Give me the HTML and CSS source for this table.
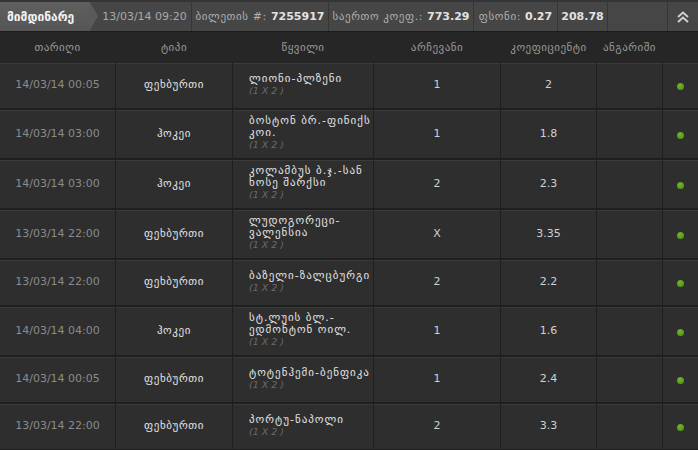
FILE: index.html
```html
<!DOCTYPE html>
<html lang="ka">
<head>
<meta charset="utf-8">
<title>ბილეთი</title>
<link rel="stylesheet" href="styles.css">
</head>
<body>
<div class="panel">
  <div class="topbar">
    <div class="tab">მიმდინარე</div>
    <div class="seg seg-date">13/03/14 09:20</div>
    <div class="seg seg-ticket"><span class="lbl">ბილეთის #:</span> <b>7255917</b></div>
    <div class="seg seg-total"><span class="lbl">საერთო კოეფ.:</span> <b>773.29</b></div>
    <div class="seg seg-stake"><span class="lbl">ფსონი:</span> <b>0.27</b></div>
    <div class="seg seg-amount"><b>208.78</b></div>
    <div class="seg seg-spacer"></div>
    <div class="seg seg-toggle">
      <svg width="14" height="12" viewBox="0 0 14 12"><path d="M2 6 L7 1.5 L12 6 M2 11 L7 6.5 L12 11" fill="none" stroke="#cfcfcf" stroke-width="2"/></svg>
    </div>
  </div>

  <div class="grid head">
    <div>თარიღი</div>
    <div>ტიპი</div>
    <div>წყვილი</div>
    <div>არჩევანი</div>
    <div>კოეფიციენტი</div>
    <div>ანგარიში</div>
    <div></div>
  </div>

  <div class="rows">
    <div class="grid row">
      <div class="c date">14/03/14 00:05</div>
      <div class="c type">ფეხბურთი</div>
      <div class="c name"><span>ლიონი-პლზენი</span><i>(1 X 2 )</i></div>
      <div class="c num">1</div>
      <div class="c num">2</div>
      <div class="c"></div>
      <div class="c"><span class="dot"></span></div>
    </div>
    <div class="grid row">
      <div class="c date">14/03/14 03:00</div>
      <div class="c type">ჰოკეი</div>
      <div class="c name"><span>ბოსტონ ბრ.-ფინიქს კოი.</span><i>(1 X 2 )</i></div>
      <div class="c num">1</div>
      <div class="c num">1.8</div>
      <div class="c"></div>
      <div class="c"><span class="dot"></span></div>
    </div>
    <div class="grid row">
      <div class="c date">14/03/14 03:00</div>
      <div class="c type">ჰოკეი</div>
      <div class="c name"><span>კოლამბუს ბ.ჯ.-სან ხოსე შარქსი</span><i>(1 X 2 )</i></div>
      <div class="c num">2</div>
      <div class="c num">2.3</div>
      <div class="c"></div>
      <div class="c"><span class="dot"></span></div>
    </div>
    <div class="grid row">
      <div class="c date">13/03/14 22:00</div>
      <div class="c type">ფეხბურთი</div>
      <div class="c name"><span>ლუდოგორეცი-ვალენსია</span><i>(1 X 2 )</i></div>
      <div class="c num">X</div>
      <div class="c num">3.35</div>
      <div class="c"></div>
      <div class="c"><span class="dot"></span></div>
    </div>
    <div class="grid row">
      <div class="c date">13/03/14 22:00</div>
      <div class="c type">ფეხბურთი</div>
      <div class="c name"><span>ბაზელი-ზალცბურგი</span><i>(1 X 2 )</i></div>
      <div class="c num">2</div>
      <div class="c num">2.2</div>
      <div class="c"></div>
      <div class="c"><span class="dot"></span></div>
    </div>
    <div class="grid row">
      <div class="c date">14/03/14 04:00</div>
      <div class="c type">ჰოკეი</div>
      <div class="c name"><span>სტ.ლუის ბლ.-ედმონტონ ოილ.</span><i>(1 X 2 )</i></div>
      <div class="c num">1</div>
      <div class="c num">1.6</div>
      <div class="c"></div>
      <div class="c"><span class="dot"></span></div>
    </div>
    <div class="grid row">
      <div class="c date">14/03/14 00:05</div>
      <div class="c type">ფეხბურთი</div>
      <div class="c name"><span>ტოტენჰემი-ბენფიკა</span><i>(1 X 2 )</i></div>
      <div class="c num">1</div>
      <div class="c num">2.4</div>
      <div class="c"></div>
      <div class="c"><span class="dot"></span></div>
    </div>
    <div class="grid row">
      <div class="c date">13/03/14 22:00</div>
      <div class="c type">ფეხბურთი</div>
      <div class="c name"><span>პორტუ-ნაპოლი</span><i>(1 X 2 )</i></div>
      <div class="c num">2</div>
      <div class="c num">3.3</div>
      <div class="c"></div>
      <div class="c"><span class="dot"></span></div>
    </div>
  </div>
</div>
</body>
</html>
```

FILE: styles.css
```css
* { box-sizing: border-box; }
html, body {
  margin: 0;
  padding: 0;
  background: #1f1f1f;
  width: 698px;
  height: 450px;
  overflow: hidden;
}
body {
  font-family: "DejaVu Sans", "Noto Sans", sans-serif;
  font-size: 11px;
  color: #cfcfcf;
}
.panel {
  width: 698px;
}

/* top bar */
.topbar {
  display: flex;
  height: 32px;
  background: #464646;
  border-top: 2px solid #353535;
  border-bottom: 1px solid #1c1c1c;
}
.tab {
  position: relative;
  width: 90px;
  flex: none;
  display: flex;
  align-items: center;
  padding-left: 7px;
  font-weight: bold;
  font-size: 12px;
  color: #f2f2f2;
  background: linear-gradient(#5f5f5f, #565656);
  z-index: 1;
}
.tab::after {
  content: "";
  position: absolute;
  left: 90px;
  top: 0;
  border-top: 14.5px solid transparent;
  border-bottom: 14.5px solid transparent;
  border-left: 8px solid #5a5a5a;
}
.seg {
  flex: none;
  display: flex;
  align-items: center;
  justify-content: center;
  border-right: 1px solid #363636;
  color: #a9a9a9;
  white-space: nowrap;
  font-size: 11px;
}
.seg b {
  color: #e2e2e2;
  font-weight: bold;
  margin-left: 4px;
}
.seg .lbl { color: #b0b0b0; letter-spacing: 0.6px; }
.seg-date { width: 102px; padding-left: 8px; }
.seg-ticket { width: 137px; }
.seg-total { width: 145px; }
.seg-stake { width: 84px; }
.seg-amount { width: 50px; }
.seg-amount b { margin-left: 0; }
.seg-spacer { flex: 1; }
.seg-toggle { width: 30px; border-right: none; }

/* grid rows */
.grid {
  display: grid;
  grid-template-columns: 115px 116px 140px 126px 95px 65px 35px;
  column-gap: 1px;
}
.head {
  height: 31px;
  background: #262626;
  align-items: center;
  text-align: center;
  color: #9a9a9a;
  letter-spacing: 0.5px;
}
.rows {
  display: flex;
  flex-direction: column;
  gap: 2px;
}
.row {
  background: #1f1f1f;
}
.c {
  min-height: 45px;
  background: #2e2e2e;
  border-top: 1px solid #3b3b3b;
  display: flex;
  align-items: center;
  justify-content: center;
  text-align: center;
  padding: 4px 0 7px;
}
.date { color: #8b8b8b; }
.type { color: #e4e4e4; letter-spacing: 0.6px; }
.num { color: #d0d0d0; }
.name {
  flex-direction: column;
  align-items: flex-start;
  justify-content: center;
  text-align: left;
  padding-left: 16px;
  padding-right: 2px;
  line-height: 12px;
  color: #e4e4e4;
}
.name span { letter-spacing: 1px; }
.name i {
  font-size: 9.5px;
  color: #6a6a6a;
}
.dot {
  width: 7px;
  height: 7px;
  border-radius: 50%;
  margin-top: 4px;
  background: radial-gradient(circle at 40% 35%, #72b52a, #4a8a0e);
}
```
